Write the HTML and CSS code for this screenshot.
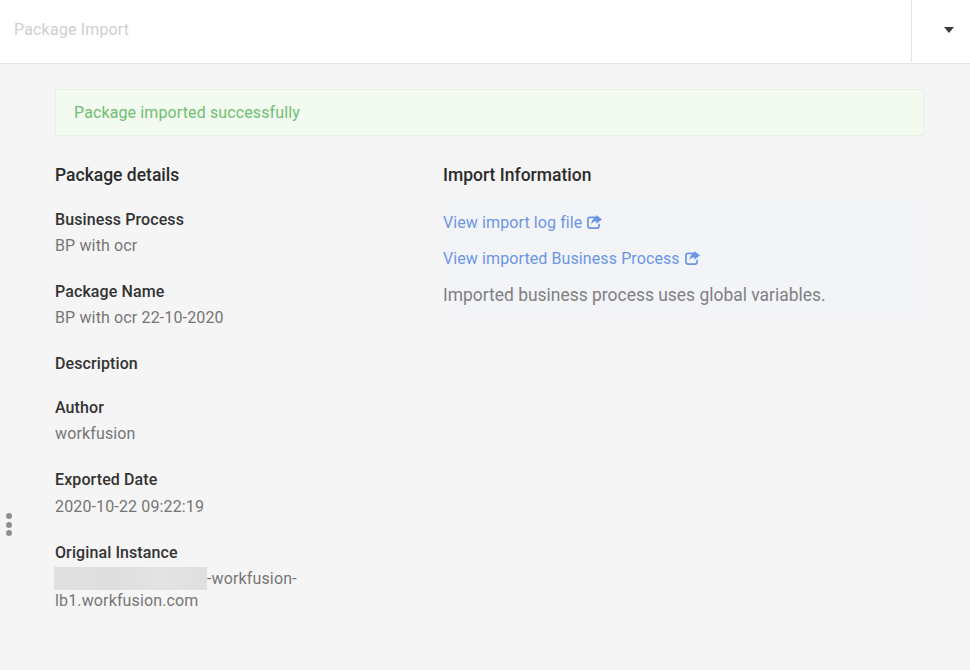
FILE: index.html
```html
<!DOCTYPE html>
<html lang="en">
<head>
    <meta charset="UTF-8">
    <title>Package Import</title>
    <link rel="stylesheet" href="styles.css">
</head>
<body>

<header class="topbar">
    <div class="topbar-title">Package Import</div>
    <div class="topbar-menu"><span class="caret"></span></div>
</header>

<div class="side-handle">
    <span></span>
    <span></span>
    <span></span>
</div>

<main class="content">
    <div class="alert-success">Package imported successfully</div>

    <div class="columns">
        <section class="details">
            <h2>Package details</h2>

            <div class="field">
                <div class="field-label">Business Process</div>
                <div class="field-value">BP with ocr</div>
            </div>
            <div class="field">
                <div class="field-label">Package Name</div>
                <div class="field-value">BP with ocr 22-10-2020</div>
            </div>
            <div class="field">
                <div class="field-label">Description</div>
            </div>
            <div class="field">
                <div class="field-label">Author</div>
                <div class="field-value">workfusion</div>
            </div>
            <div class="field">
                <div class="field-label">Exported Date</div>
                <div class="field-value field-date">2020-10-22 09:22:19</div>
            </div>
            <div class="field">
                <div class="field-label">Original Instance</div>
                <div class="field-value"><span class="redacted"></span>-workfusion-lb1.workfusion.com</div>
            </div>
        </section>

        <section class="import-info">
            <h2>Import Information</h2>
            <div class="info-panel">
                <a class="info-link" href="#">View import log file
                    <svg class="share-icon" viewBox="0 0 16 15"><path d="M11.5 2.6H3.2C2 2.6 1 3.4 1 4.6v7.3c0 1.2 1 2.1 2.2 2.1h7.6c1.2 0 2.1-.9 2.1-2.1V9.4" fill="none" stroke="currentColor" stroke-width="1.8"/><path d="M10 0 16 4.7 10 9.4V6.8C7.4 6.8 5.7 7.6 4.7 10.4 4.7 5.8 6.8 3 10 2.6z" fill="currentColor"/></svg>
                </a>
                <a class="info-link" href="#">View imported Business Process
                    <svg class="share-icon" viewBox="0 0 16 15"><path d="M11.5 2.6H3.2C2 2.6 1 3.4 1 4.6v7.3c0 1.2 1 2.1 2.2 2.1h7.6c1.2 0 2.1-.9 2.1-2.1V9.4" fill="none" stroke="currentColor" stroke-width="1.8"/><path d="M10 0 16 4.7 10 9.4V6.8C7.4 6.8 5.7 7.6 4.7 10.4 4.7 5.8 6.8 3 10 2.6z" fill="currentColor"/></svg>
                </a>
                <p class="info-note">Imported business process uses global variables.</p>
            </div>
        </section>
    </div>
</main>

</body>
</html>
```

FILE: styles.css
```css
html, body {
    height: 100%;
}

body {
    margin: 0;
    background: #f5f5f5;
    font-family: Roboto, Arial, sans-serif;
    font-size: 16px;
    color: #757575;
    overflow: hidden;
    position: relative;
}

.topbar {
    display: flex;
    justify-content: space-between;
    height: 63px;
    background: #fff;
    border-bottom: 1px solid #e4e4e4;
}

.topbar-title {
    padding: 21px 14px 0;
    line-height: 18px;
    letter-spacing: 0.17px;
    color: #cfcfcf;
}

.topbar-menu {
    display: flex;
    align-items: center;
    justify-content: flex-end;
    box-sizing: border-box;
    width: 59px;
    height: 62px;
    padding-right: 16px;
    border-left: 1px solid #e4e4e4;
}

.caret {
    margin-top: -2px;
    border-top: 6px solid #3a3a3a;
    border-left: 5.5px solid transparent;
    border-right: 5.5px solid transparent;
}

.side-handle {
    position: absolute;
    left: 6px;
    top: 513px;
    display: flex;
    flex-direction: column;
    gap: 2.5px;
}

.side-handle span {
    width: 6px;
    height: 6px;
    border-radius: 50%;
    background: #8f8f8f;
}

.content {
    padding: 25px 46px 0 55px;
}

.alert-success {
    height: 45px;
    line-height: 45px;
    padding-left: 18px;
    background: #f3faf0;
    border: 1px solid #e6f1e3;
    color: #6fbf73;
    letter-spacing: 0.12px;
}

.columns {
    display: flex;
    margin-top: 28px;
}

.details {
    width: 242px;
    margin-right: 146px;
}

.import-info {
    flex: 1;
}

h2 {
    margin: 0;
    font-size: 17.5px;
    line-height: 22px;
    font-weight: 500;
    color: #2b2b2b;
}

.details h2 {
    margin-bottom: 23px;
}

.field {
    margin-bottom: 22px;
}

.field-label {
    line-height: 22px;
    font-weight: 500;
    letter-spacing: 0.1px;
    color: #333;
}

.field-value {
    margin-top: 4px;
    margin-bottom: 24px;
    line-height: 22px;
    letter-spacing: 0.14px;
}

.field-date {
    margin-top: 5px;
}

.redacted {
    display: inline-block;
    width: 153px;
    height: 23px;
    margin: -3px 0 -1px -1px;
    vertical-align: middle;
    background: linear-gradient(to right, #e0e0e0, #dedede 40%, #e3e3e3 70%, #dfdfdf);
}

.info-panel {
    margin-top: 12px;
    padding: 14px 0 11px;
    background: #f3f4f8;
}

.info-link {
    display: block;
    margin-bottom: 14px;
    line-height: 22px;
    letter-spacing: 0.1px;
    color: #6b96e6;
    text-decoration: none;
}

.share-icon {
    width: 15px;
    height: 14px;
    margin-left: 1px;
    vertical-align: -1px;
}

.info-note {
    margin: -1px 0 0;
    font-size: 17.45px;
    line-height: 24px;
    color: #808080;
}
```
